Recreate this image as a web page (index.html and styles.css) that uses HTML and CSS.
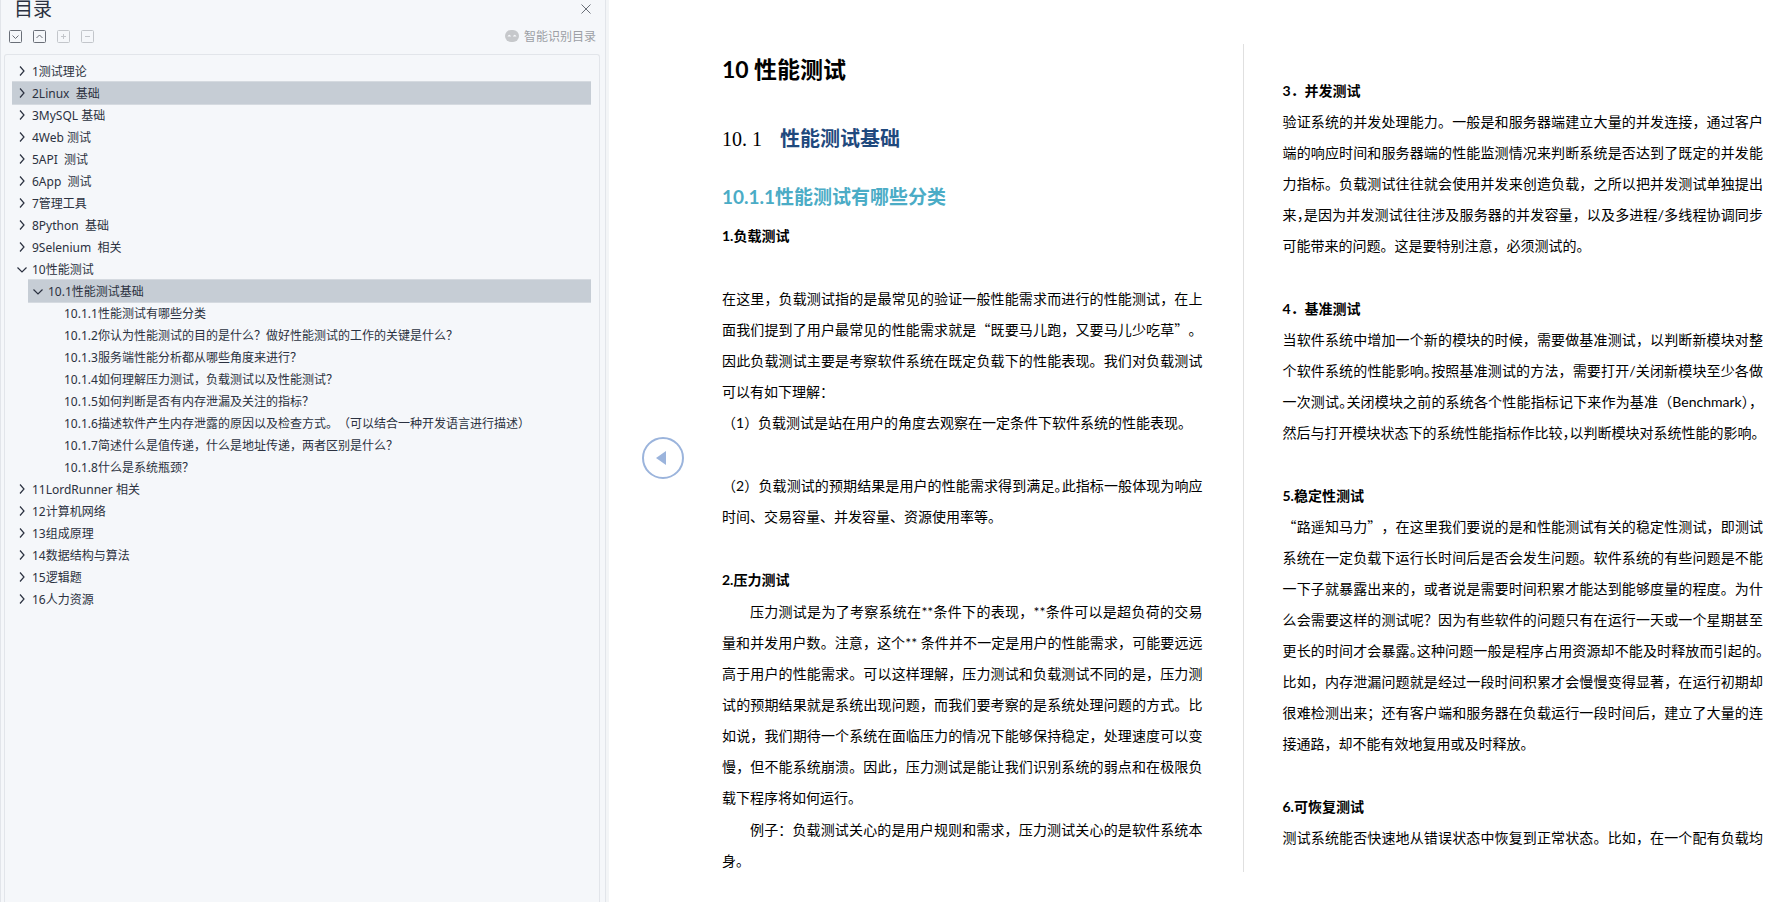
FILE: index.html
```html
<!DOCTYPE html>
<html lang="zh-CN">
<head>
<meta charset="utf-8">
<title>目录 - 性能测试</title>
<link rel="stylesheet" href="styles.css">
</head>
<body>
<div class="app">
  <aside class="sidebar">
    <header class="panel-head">
      <h2 class="panel-title">目录</h2>
      <button class="icon-btn" aria-label="关闭"><svg width="10" height="10" viewBox="0 0 10 10"><path d="M0.500 0.500l9 9M9.500 0.500l-9 9"/></svg></button>
    </header>
    <div class="toolbar">
      <div class="tools">
        <button class="icon-btn" aria-label="全部展开"><svg width="13" height="13" viewBox="0 0 13 13"><rect x="0.500" y="0.500" width="12" height="12" rx="1"/><path d="M3.500 5.500l3 3 3-3"/></svg></button>
        <button class="icon-btn" aria-label="全部收起"><svg width="13" height="13" viewBox="0 0 13 13"><rect x="0.500" y="0.500" width="12" height="12" rx="1"/><path d="M3.500 8l3-3 3 3"/></svg></button>
        <button class="icon-btn faint" aria-label="增加"><svg width="13" height="13" viewBox="0 0 13 13"><rect x="0.500" y="0.500" width="12" height="12" rx="1"/><path d="M4 6.500h5M6.500 4v5"/></svg></button>
        <button class="icon-btn faint" aria-label="减少"><svg width="13" height="13" viewBox="0 0 13 13"><rect x="0.500" y="0.500" width="12" height="12" rx="1"/><path d="M4 6.500h5"/></svg></button>
      </div>
      <button class="smart"><svg width="14" height="12" viewBox="0 0 14 12"><rect width="14" height="12" rx="6" fill="#c6c8cb"/><path d="M2.500 6.500q1.800-3.500 3.600 0zM7.900 6.500q1.800-3.500 3.600 0z" fill="#f5f7fa"/></svg>智能识别目录</button>
    </div>
    <nav class="outline">
      <ul class="tree">
        <li><a class="row" href="#"><svg class="chev" viewBox="0 0 10 10"><path d="M3 0.500L7 5 3 9.500"/></svg>1测试理论</a></li>
        <li><a class="row active" href="#"><svg class="chev" viewBox="0 0 10 10"><path d="M3 0.500L7 5 3 9.500"/></svg>2Linux&nbsp; 基础</a></li>
        <li><a class="row" href="#"><svg class="chev" viewBox="0 0 10 10"><path d="M3 0.500L7 5 3 9.500"/></svg>3MySQL 基础</a></li>
        <li><a class="row" href="#"><svg class="chev" viewBox="0 0 10 10"><path d="M3 0.500L7 5 3 9.500"/></svg>4Web 测试</a></li>
        <li><a class="row" href="#"><svg class="chev" viewBox="0 0 10 10"><path d="M3 0.500L7 5 3 9.500"/></svg>5API&nbsp; 测试</a></li>
        <li><a class="row" href="#"><svg class="chev" viewBox="0 0 10 10"><path d="M3 0.500L7 5 3 9.500"/></svg>6App&nbsp; 测试</a></li>
        <li><a class="row" href="#"><svg class="chev" viewBox="0 0 10 10"><path d="M3 0.500L7 5 3 9.500"/></svg>7管理工具</a></li>
        <li><a class="row" href="#"><svg class="chev" viewBox="0 0 10 10"><path d="M3 0.500L7 5 3 9.500"/></svg>8Python&nbsp; 基础</a></li>
        <li><a class="row" href="#"><svg class="chev" viewBox="0 0 10 10"><path d="M3 0.500L7 5 3 9.500"/></svg>9Selenium&nbsp; 相关</a></li>
        <li><a class="row" href="#"><svg class="chev" viewBox="0 0 10 10"><path d="M0.500 3.500L5 8l4.500-4.500"/></svg>10性能测试</a>
          <ul class="sub">
            <li><a class="row active" href="#"><svg class="chev" viewBox="0 0 10 10"><path d="M0.500 3.500L5 8l4.500-4.500"/></svg>10.1性能测试基础</a>
              <ul class="leaves">
                <li><a class="row" href="#">10.1.1性能测试有哪些分类</a></li>
                <li><a class="row" href="#">10.1.2你认为性能测试的目的是什么？做好性能测试的工作的关键是什么？</a></li>
                <li><a class="row" href="#">10.1.3服务端性能分析都从哪些角度来进行？</a></li>
                <li><a class="row" href="#">10.1.4如何理解压力测试，负载测试以及性能测试？</a></li>
                <li><a class="row" href="#">10.1.5如何判断是否有内存泄漏及关注的指标？</a></li>
                <li><a class="row" href="#">10.1.6描述软件产生内存泄露的原因以及检查方式。（可以结合一种开发语言进行描述）</a></li>
                <li><a class="row" href="#">10.1.7简述什么是值传递，什么是地址传递，两者区别是什么？</a></li>
                <li><a class="row" href="#">10.1.8什么是系统瓶颈？</a></li>
              </ul>
            </li>
          </ul>
        </li>
        <li><a class="row" href="#"><svg class="chev" viewBox="0 0 10 10"><path d="M3 0.500L7 5 3 9.500"/></svg>11LordRunner 相关</a></li>
        <li><a class="row" href="#"><svg class="chev" viewBox="0 0 10 10"><path d="M3 0.500L7 5 3 9.500"/></svg>12计算机网络</a></li>
        <li><a class="row" href="#"><svg class="chev" viewBox="0 0 10 10"><path d="M3 0.500L7 5 3 9.500"/></svg>13组成原理</a></li>
        <li><a class="row" href="#"><svg class="chev" viewBox="0 0 10 10"><path d="M3 0.500L7 5 3 9.500"/></svg>14数据结构与算法</a></li>
        <li><a class="row" href="#"><svg class="chev" viewBox="0 0 10 10"><path d="M3 0.500L7 5 3 9.500"/></svg>15逻辑题</a></li>
        <li><a class="row" href="#"><svg class="chev" viewBox="0 0 10 10"><path d="M3 0.500L7 5 3 9.500"/></svg>16人力资源</a></li>
      </ul>
    </nav>
  </aside>

  <main class="viewer">
    <div class="gutter">
      <button class="prev" aria-label="上一页"><svg width="42" height="42" viewBox="0 0 42 42"><circle cx="21" cy="21" r="20" fill="none" stroke="#9bb4dc" stroke-width="2"/><path d="M24 14v14l-10-7z" fill="#9bb4dc"/></svg></button>
    </div>
    <article class="page page-left">
      <h1 class="chapter"><span class="num">10</span> 性能测试</h1>
      <h2 class="section"><span class="section-num">10. 1</span>性能测试基础</h2>
      <h3 class="topic"><span class="num">10.1.1</span>性能测试有哪些分类</h3>
      <h4 class="item"><span class="num">1.</span>负载测试</h4>
      <p class="gap">在这里，负载测试指的是最常见的验证一般性能需求而进行的性能测试，在上面我们提到了用户最常见的性能需求就是“既要马儿跑，又要马儿少吃<span class="wide">草”。</span>因此负载测试主要是考察软件系统在既定负载下的性能表现。我们对负载测试可以有如下理解：</p>
      <p>（<span class="num">1</span>）负载测试是站在用户的角度去观察在一定条件下软件系统的性能表现。</p>
      <p class="gap">（<span class="num">2</span>）负载测试的预期结果是用户的性能需求得到满足<span class="tight">。</span>此指标一般体现为响应时间、交易容量、并发容量、资源使用率等。</p>
      <h4 class="item gap"><span class="num">2.</span>压力测试</h4>
      <p class="indent">压力测试是为了考察系统在<span class="num">**</span>条件下的表现，<span class="num">**</span>条件可以是超负荷的交易量和并发用户数。注意，这个<span class="num">** </span>条件并不一定是用户的性能需求，可能要远远高于用户的性能需求。可以这样理解，压力测试和负载测试不同的是，压力测试的预期结果就是系统出现问题，而我们要考察的是系统处理问题的方式。比如说，我们期待一个系统在面临压力的情况下能够保持稳定，处理速度可以变慢，但不能系统崩溃。因此，压力测试是能让我们识别系统的弱点和在极限负载下程序将如何运行。</p>
      <p class="indent">例子：负载测试关心的是用户规则和需求，压力测试关心的是软件系统本身。</p>
    </article>
    <article class="page page-right">
      <h4 class="item"><span class="num">3</span>．并发测试</h4>
      <p>验证系统的并发处理能力。一般是和服务器端建立大量的并发连接，通过客户端的响应时间和服务器端的性能监测情况来判断系统是否达到了既定的并发能力指标。负载测试往往就会使用并发来创造负载，之所以把并发测试单独提出来<span class="tight">，</span>是因为并发测试往往涉及服务器的并发容量，以及多进程<span class="num">/</span>多线程协调同步可能带来的问题。这是要特别注意，必须测试的。</p>
      <h4 class="item gap"><span class="num">4</span>．基准测试</h4>
      <p>当软件系统中增加一个新的模块的时候，需要做基准测试，以判断新模块对整个软件系统的性能影响<span class="tight">。</span>按照基准测试的方法，需要打开<span class="num">/</span>关闭新模块至少各做一次测试<span class="tight">。</span>关闭模块之前的系统各个性能指标记下来作为基准（<span class="num">Benchmark</span>），然后与打开模块状态下的系统性能指标作比较<span class="tight">，</span>以判断模块对系统性能的影响<span class="tight">。</span></p>
      <h4 class="item gap"><span class="num">5.</span>稳定性测试</h4>
      <p>“路遥知马<span class="wide">力”，</span>在这里我们要说的是和性能测试有关的稳定性测试，即测试系统在一定负载下运行长时间后是否会发生问题。软件系统的有些问题是不能一下子就暴露出来的，或者说是需要时间积累才能达到能够度量的程度。为什么会需要这样的测试呢？因为有些软件的问题只有在运行一天或一个星期甚至更长的时间才会暴露<span class="tight">。</span>这种问题一般是程序占用资源却不能及时释放而引起的<span class="tight">。</span>比如，内存泄漏问题就是经过一段时间积累才会慢慢变得显著，在运行初期却很难检测出来；还有客户端和服务器在负载运行一段时间后，建立了大量的连接通路，却不能有效地复用或及时释放。</p>
      <h4 class="item gap"><span class="num">6.</span>可恢复测试</h4>
      <p class="full">测试系统能否快速地从错误状态中恢复到正常状态。比如，在一个配有负载均</p>
    </article>
  </main>
</div>
</body>
</html>
```

FILE: styles.css
```css
* {
  box-sizing: border-box;
}

body {
  margin: 0;
  background: #fff;
  color: #000;
  font-family: "Noto Sans CJK SC", sans-serif;
}

h1, h2, h3, h4, p, ul {
  margin: 0;
  padding: 0;
}

ul {
  list-style: none;
}

button {
  border: 0;
  padding: 0;
  background: none;
  font: inherit;
  color: inherit;
}

.app {
  display: flex;
  height: 100vh;
  overflow: hidden;
}

/* Outline panel */

.sidebar {
  flex: 0 0 606px;
  display: flex;
  flex-direction: column;
  padding: 0 5px 0 3px;
  border-left: 1px solid #e2e5ea;
  border-right: 1px solid #e2e5ea;
  background: #f5f7fa;
  color: #2b3140;
  font-family: "Noto Sans", "Noto Sans CJK SC", sans-serif;
  font-size: 12px;
}

.panel-head {
  display: flex;
  justify-content: space-between;
  align-items: center;
  height: 18px;
  padding: 0 9px 0 10px;
}

.panel-title {
  font-size: 19px;
  font-weight: 400;
  line-height: 18px;
}

.icon-btn {
  display: flex;
}

.icon-btn svg {
  fill: none;
  stroke: #6a6f78;
  stroke-width: 1;
}

.icon-btn.faint svg {
  stroke: #c3c6cb;
}

.toolbar {
  display: flex;
  justify-content: space-between;
  align-items: center;
  height: 36px;
  padding: 0 4px 0 5px;
}

.tools {
  display: flex;
  gap: 11px;
}

.smart {
  display: flex;
  align-items: center;
  gap: 5px;
  color: #9c9fa5;
}

.outline {
  flex: 1;
  padding: 5px 8px 0 7px;
  border: 1px solid #e2e5ea;
  border-bottom: 0;
  border-radius: 3px 3px 0 0;
}

.row {
  display: flex;
  align-items: center;
  height: 22px;
  padding-left: 5px;
  color: inherit;
  text-decoration: none;
  white-space: nowrap;
  text-spacing-trim: space-all;
}

.row.active {
  background: #c6cdd5;
  box-shadow: 0 1px #d5dae0, 0 -1px #d5dae0;
}

.chev {
  width: 10px;
  height: 10px;
  margin-right: 5px;
  fill: none;
  stroke: #2b3140;
  stroke-width: 1.2;
}

.sub {
  padding-left: 16px;
}

.leaves {
  padding-left: 31px;
}

/* Document viewer */

.viewer {
  flex: 1;
  display: flex;
  padding: 44px 28px 30px 0;
  border-left: 3px solid #f3f5f7;
}

.gutter {
  flex: 0 0 113px;
  display: flex;
  align-items: center;
  justify-content: center;
  padding-right: 5px;
}

.prev {
  display: flex;
}

.page {
  flex: 1 1 0;
  min-width: 0;
  font-size: 14px;
  line-height: 31px;
  text-align: justify;
}

.page-left {
  padding-right: 40px;
}

.page-right {
  padding: 31px 0 0 39px;
  border-left: 1px solid #e0e0e0;
}

.num {
  font-family: Lato, "Noto Sans CJK SC", sans-serif;
}

.chapter {
  font-size: 23px;
  font-weight: 700;
  line-height: 48px;
}

.section {
  margin-top: 25px;
  color: #1f497d;
  font-size: 20px;
  font-weight: 700;
  line-height: 40px;
}

.section-num {
  margin-right: 18px;
  color: #000;
  font-family: "Liberation Serif", serif;
  font-weight: 400;
}

.topic {
  margin-top: 17px;
  color: #4bacc6;
  font-size: 19px;
  font-weight: 700;
  line-height: 40px;
}

.item {
  font-size: 14px;
  font-weight: 700;
}

.topic + .item {
  margin-top: 3px;
}

.gap {
  margin-top: 32px;
}

.indent {
  margin-top: 1px;
  text-indent: 28px;
}

/* Punctuation set at half or full width */

.tight {
  font-feature-settings: "halt";
}

.wide {
  text-spacing-trim: space-all;
}

.full {
  text-align-last: justify;
}
```
